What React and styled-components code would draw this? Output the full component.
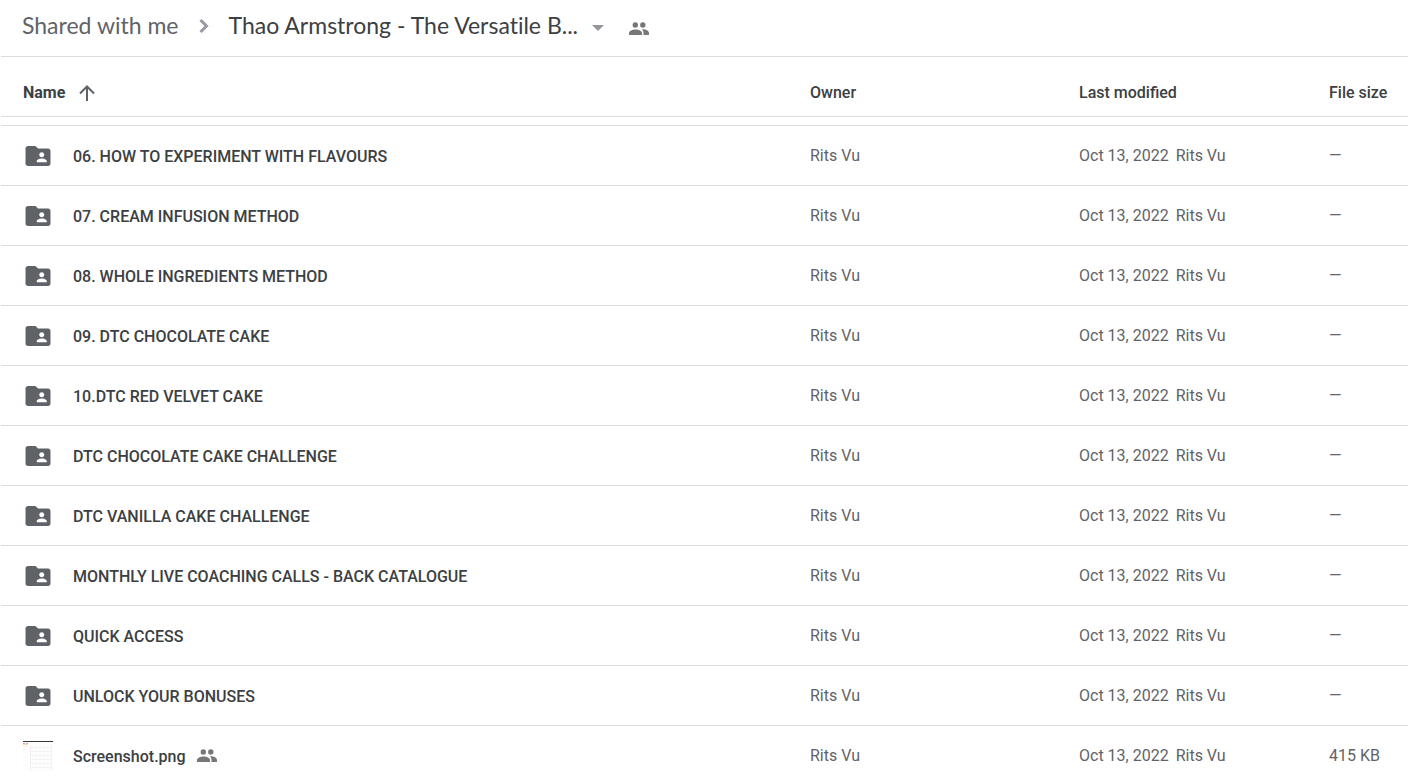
import React from "react";
import styled, { createGlobalStyle } from "styled-components";
import { MdFolderShared } from "react-icons/md";

const GlobalStyle = createGlobalStyle`
  body {
    margin: 0;
    background: #fff;
    font-family: Roboto, "Liberation Sans", sans-serif;
  }
`;

const Page = styled.main`
  height: 100vh;
  overflow: hidden;
  padding-left: 1px;
  box-sizing: border-box;
`;

const Breadcrumbs = styled.nav`
  display: flex;
  align-items: center;
  height: 56px;
  padding: 0 21px;
  border-bottom: 1px solid #dadce0;
  font-family: Lato, "Open Sans", sans-serif;
  font-size: 23px;
  line-height: 32px;
  font-variant-ligatures: none;
`;

const Crumb = styled.a`
  color: #5f6368;
  text-decoration: none;
  white-space: nowrap;
`;

const CrumbText = styled.span`
  display: block;
  padding-bottom: 6px;
`;

const FolderButton = styled.button`
  display: flex;
  align-items: center;
  gap: 14px;
  padding: 0;
  border: 0;
  background: none;
  font: inherit;
  font-variant-ligatures: none;
  color: #3c4043;
  white-space: nowrap;
`;

const Chevron = styled.svg`
  width: 12px;
  height: 16px;
  margin: 0 19px;
  padding-bottom: 4px;
  fill: none;
  stroke: #9a99a3;
  stroke-width: 3;
`;

const Caret = styled.svg`
  width: 12px;
  height: 6px;
  fill: #96959a;
`;

const ShareButton = styled.button`
  display: flex;
  margin-left: 24px;
  padding: 2px 0 0;
  border: 0;
  background: none;
`;

const PeopleSvg = styled.svg`
  width: 22px;
  height: 22px;
  fill: #77777a;
`;

const Table = styled.table`
  width: 100%;
  table-layout: fixed;
  border-spacing: 0;
`;

const Column = styled.col`
  width: ${(props) => props.$width};
`;

const HeaderCell = styled.th`
  height: 60px;
  padding: 12px 0 0 ${(props) => (props.$first ? "22px" : "0")};
  box-sizing: border-box;
  border-bottom: 1px solid #dadce0;
  font-size: 16px;
  font-weight: ${(props) => (props.$first ? 700 : 500)};
  line-height: 24px;
  text-align: left;
  color: #3c4043;
`;

const SortButton = styled.button`
  display: flex;
  align-items: center;
  gap: 14px;
  padding: 0;
  border: 0;
  background: none;
  font: inherit;
  color: inherit;
`;

const Arrow = styled.svg`
  width: 16px;
  height: 16px;
  fill: none;
  stroke: #5f6368;
  stroke-width: 2;
`;

const Spacer = styled.td`
  height: 9px;
  padding: 0;
  box-sizing: border-box;
  border-bottom: 1px solid #dadce0;
`;

const Cell = styled.td`
  height: 60px;
  padding: 0;
  box-sizing: border-box;
  border-bottom: 1px solid #dadce0;
  font-size: 16px;
  line-height: 24px;
  color: #5f6368;
  white-space: nowrap;
`;

const FileName = styled.div`
  display: flex;
  align-items: center;
  gap: 20px;
  padding-left: 22px;
  font-weight: 500;
  color: #3c4043;
`;

const Label = styled.span`
  display: flex;
  align-items: center;
  gap: 10px;
`;

const LabelText = styled.span`
  padding-top: 2px;
`;

const FolderIcon = styled(MdFolderShared)`
  width: 30px;
  height: 30px;
  color: #5f6368;
`;

const Thumbnail = styled.svg`
  width: 30px;
  height: 30px;
`;

const ModifiedBy = styled.span`
  margin-left: 7px;
`;

const files = [
  { name: "06. HOW TO EXPERIMENT WITH FLAVOURS" },
  { name: "07. CREAM INFUSION METHOD" },
  { name: "08. WHOLE INGREDIENTS METHOD" },
  { name: "09. DTC CHOCOLATE CAKE" },
  { name: "10.DTC RED VELVET CAKE" },
  { name: "DTC CHOCOLATE CAKE CHALLENGE" },
  { name: "DTC VANILLA CAKE CHALLENGE" },
  { name: "MONTHLY LIVE COACHING CALLS - BACK CATALOGUE" },
  { name: "QUICK ACCESS" },
  { name: "UNLOCK YOUR BONUSES" },
  { name: "Screenshot.png", size: "415 KB", shared: true },
];

const PeopleIcon = () => (
  <PeopleSvg viewBox="0 0 22 22" aria-hidden="true">
    <circle cx="7.3" cy="7" r="2.700" />
    <circle cx="14.800" cy="7" r="2.700" />
    <path d="M1 17v-1.800c0-2.400 3.500-3.700 6.500-3.700s6.500 1.300 6.500 3.700v1.800z" />
    <path d="M14 11.400c3-.3 7 1 7 3.800v1.800h-5.500v-1.800c0-1.500-.5-2.700-1.500-3.800z" />
  </PeopleSvg>
);

const ImagePreview = () => (
  <Thumbnail viewBox="0 0 30 30" aria-hidden="true">
    <rect width="30" height="30" fill="#fdfdfd" />
    <rect width="30" height="1" fill="#35363a" />
    <path d="M0 2.500h6" stroke="#d9a9a0" strokeDasharray="2 1" />
    <path d="M0 3.500h5" stroke="#f7d9a8" />
    <path d="M0 5.500h4M0 8.500h2" stroke="#faecd8" />
    <path
      d="M7 6.500h22M7 10.500h22M7 14.500h22M7 18.500h22M7 22.500h22M7 26.500h22"
      stroke="#f0eeee"
      strokeDasharray="3 1"
    />
    <path d="M7.500 5v25" stroke="#f5eeee" />
    <path d="M28.500 3v26" stroke="#faf1ea" />
  </Thumbnail>
);

const App = () => {
  return (
    <Page>
      <GlobalStyle />
      <Breadcrumbs aria-label="Breadcrumb">
        <Crumb href="#shared">
          <CrumbText>Shared with me</CrumbText>
        </Crumb>
        <Chevron viewBox="0 0 12 16" aria-hidden="true">
          <path d="M2.500 2l6 6-6 6" />
        </Chevron>
        <FolderButton type="button">
          <CrumbText>Thao Armstrong - The Versatile B...</CrumbText>
          <Caret viewBox="0 0 12 6" aria-hidden="true">
            <path d="M0 0h12l-6 6z" />
          </Caret>
        </FolderButton>
        <ShareButton type="button" aria-label="Manage people">
          <PeopleIcon />
        </ShareButton>
      </Breadcrumbs>
      <Table>
        <colgroup>
          <Column />
          <Column $width="269px" />
          <Column $width="250px" />
          <Column $width="79px" />
        </colgroup>
        <thead>
          <tr>
            <HeaderCell $first>
              <SortButton type="button">
                Name
                <Arrow viewBox="0 0 16 16" aria-hidden="true">
                  <path d="M8 16V2M1 8.500l7-7 7 7" />
                </Arrow>
              </SortButton>
            </HeaderCell>
            <HeaderCell>Owner</HeaderCell>
            <HeaderCell>Last modified</HeaderCell>
            <HeaderCell>File size</HeaderCell>
          </tr>
        </thead>
        <tbody>
          <tr aria-hidden="true">
            <Spacer colSpan="4" />
          </tr>
          {files.map((file) => (
            <tr key={file.name}>
              <Cell>
                <FileName>
                  {file.size ? <ImagePreview /> : <FolderIcon aria-hidden="true" />}
                  <Label>
                    <LabelText>{file.name}</LabelText>
                    {file.shared && <PeopleIcon />}
                  </Label>
                </FileName>
              </Cell>
              <Cell>Rits Vu</Cell>
              <Cell>
                Oct 13, 2022
                <ModifiedBy>Rits Vu</ModifiedBy>
              </Cell>
              <Cell>{file.size || "—"}</Cell>
            </tr>
          ))}
        </tbody>
      </Table>
    </Page>
  );
};

export default App;
